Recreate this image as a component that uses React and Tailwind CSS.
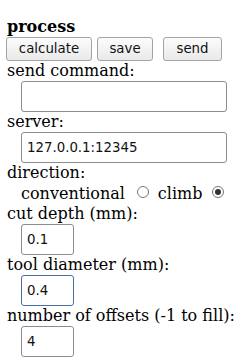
import React from 'react';

const serif = { fontFamily: '"DejaVu Serif", serif' };

const Btn = ({ children, className = '' }) => (
  <button
    className={`h-[24px] rounded-[3px] border border-[#a3a3a3] bg-gradient-to-b from-[#fcfcfc] to-[#e9e9e9] text-[13.33px] text-[#111] font-['DejaVu_Sans',sans-serif] leading-none ${className}`}
  >
    {children}
  </button>
);

const Label = ({ children, className = '' }) => (
  <div className={`h-[20px] leading-[20px] pl-[1px] whitespace-nowrap ${className}`}>{children}</div>
);

const Field = ({ value = '', w = 'w-[206px]', focus = false }) => (
  <div className="pl-[15px]">
    <div
      className={`${w} h-[31px] rounded-[3px] border ${
        focus ? 'border-[#4a6fa5]' : 'border-[#8d8d8d]'
      } bg-white flex items-center pl-[5px] text-[13.33px] text-[#111] font-['DejaVu_Sans',sans-serif]`}
    >
      {value}
    </div>
  </div>
);

const Radio = ({ checked }) => (
  <span className="inline-flex w-[12px] h-[12px] rounded-full border border-[#777] bg-white items-center justify-center">
    {checked && <span className="w-[6px] h-[6px] rounded-full bg-[#333]" />}
  </span>
);

export default function App() {
  return (
    <div className="w-[252px] h-[362px] overflow-hidden bg-white text-[16px] text-black pt-[17px] pl-[6px]" style={serif}>
      <div className="h-[20px] leading-[20px] pl-[1px] font-bold">process</div>
      <div className="flex items-center">
        <Btn className="w-[86px]">calculate</Btn>
        <Btn className="w-[56px] ml-[5px]">save</Btn>
        <Btn className="w-[59px] ml-[10px]">send</Btn>
      </div>
      <Label>send command:</Label>
      <Field />
      <Label>server:</Label>
      <Field value="127.0.0.1:12345" />
      <Label>direction:</Label>
      <div className="h-[21px] pl-[15px] flex items-center">
        <span className="leading-[20px]">conventional</span>
        <span className="ml-[12px] mt-[-3px] flex"><Radio /></span>
        <span className="ml-[9px] leading-[20px]">climb</span>
        <span className="ml-[10px] mt-[-3px] flex"><Radio checked /></span>
      </div>
      <Label>cut depth (mm):</Label>
      <Field value="0.1" w="w-[53px]" />
      <Label>tool diameter (mm):</Label>
      <Field value="0.4" w="w-[53px]" focus />
      <Label>number of offsets (-1 to fill):</Label>
      <Field value="4" w="w-[53px]" />
      <Label className="mt-[3px]">offset overlap (0-1):</Label>
    </div>
  );
}
